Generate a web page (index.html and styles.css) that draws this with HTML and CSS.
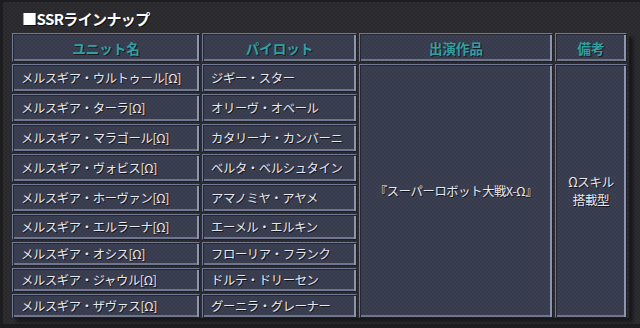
FILE: index.html
```html
<!DOCTYPE html>
<html lang="ja">
<head>
<meta charset="utf-8">
<link rel="stylesheet" href="styles.css">
</head>
<body>
<div class="page">
  <div class="title">■SSRラインナップ</div>
  <div class="lineup">
    <div class="cell head">ユニット名</div>
    <div class="cell head">パイロット</div>
    <div class="cell head">出演作品</div>
    <div class="cell head">備考</div>

    <div class="cell span works">『スーパーロボット大戦X-Ω』</div>
    <div class="cell span note">Ωスキル<br>搭載型</div>

    <div class="cell">メルスギア・ウルトゥール[Ω]</div>
    <div class="cell">ジギー・スター</div>
    <div class="cell">メルスギア・ターラ[Ω]</div>
    <div class="cell">オリーヴ・オベール</div>
    <div class="cell">メルスギア・マラゴール[Ω]</div>
    <div class="cell">カタリーナ・カンバーニ</div>
    <div class="cell">メルスギア・ヴォビス[Ω]</div>
    <div class="cell">ベルタ・ベルシュタイン</div>
    <div class="cell">メルスギア・ホーヴァン[Ω]</div>
    <div class="cell">アマノミヤ・アヤメ</div>
    <div class="cell">メルスギア・エルラーナ[Ω]</div>
    <div class="cell">エーメル・エルキン</div>
    <div class="cell">メルスギア・オシス[Ω]</div>
    <div class="cell">フローリア・フランク</div>
    <div class="cell">メルスギア・ジャウル[Ω]</div>
    <div class="cell">ドルテ・ドリーセン</div>
    <div class="cell">メルスギア・ザヴァス[Ω]</div>
    <div class="cell">グーニラ・グレーナー</div>
  </div>
</div>
</body>
</html>
```

FILE: styles.css
```css
html, body {
  margin: 0;
  padding: 0;
  background: #1c1c1f;
}
body {
  width: 640px;
  height: 328px;
  overflow: hidden;
  font-family: "Noto Sans CJK JP", "Noto Sans", sans-serif;
}
.page {
  box-sizing: border-box;
  width: 640px;
  height: 324px;
  border-top: 2px solid #1d1d20;
  border-left: 3px solid #1d1d20;
  padding: 7px 0 0 9px;
  background-color: #2c2c30;
  background-image: repeating-conic-gradient(#2e2e32 0 25%, #29292c 0 50%);
  background-size: 4px 4px;
}
.title {
  margin-left: 10px;
  height: 20px;
  line-height: 20px;
  margin-bottom: 4px;
  color: #ffffff;
  font-weight: bold;
  font-size: 15px;
  letter-spacing: -0.6px;
  text-shadow: 1px 1px 0 #111;
}
.lineup {
  display: grid;
  grid-template-columns: 188px 155px 194px 72px;
  grid-template-rows: 29px repeat(5, 28px) 26px repeat(3, 24px);
  gap: 2px;
  width: 617px;
  box-shadow: 4px 4px 3px rgba(0, 0, 0, 0.45);
}
.cell {
  box-sizing: border-box;
  display: flex;
  align-items: center;
  padding-left: 8px;
  border: 1px solid;
  border-color: #737a93 #1e2029 #1e2029 #737a93;
  box-shadow: inset 1px 1px 0 #242733, inset -2px 0 0 #8d94ad, inset 0 -2px 0 #6f758d;
  background-color: #3a3e50;
  background-image: repeating-conic-gradient(#3c4053 0 25%, #363a4b 0 50%);
  background-size: 4px 4px;
  color: #e8e8f0;
  font-size: 12.3px;
  letter-spacing: -0.35px;
  white-space: nowrap;
  text-shadow: 1px 1px 0 #15161c;
}
.head {
  justify-content: center;
  padding-left: 0;
  color: #30a0a3;
  font-weight: bold;
  font-size: 13.5px;
  letter-spacing: 0;
  text-shadow: 1px 1px 0 #1a1c24;
}
.span {
  grid-row: 2 / 11;
  justify-content: center;
  padding-left: 0;
  text-align: center;
}
.works {
  grid-column: 3;
}
.note {
  grid-column: 4;
  line-height: 18px;
  font-size: 12.5px;
}
```
